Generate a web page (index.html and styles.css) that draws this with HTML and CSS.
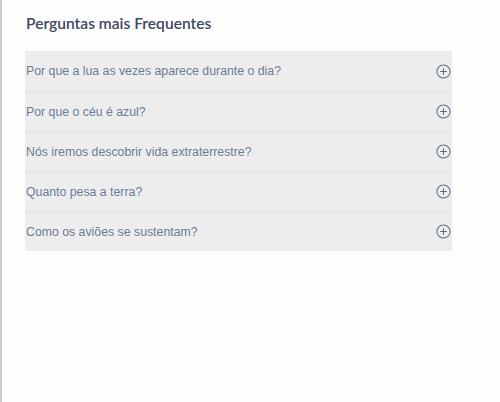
FILE: index.html
```html
<!DOCTYPE html>
<html lang="pt">
<head>
<meta charset="utf-8">
<link rel="stylesheet" href="styles.css">
</head>
<body>
<main class="page">
  <h1 class="title">Perguntas mais Frequentes</h1>
  <ul class="faq">
    <li class="item"><span class="q">Por que a lua as vezes aparece durante o dia?</span><svg class="icon" viewBox="0 0 16 16"><circle cx="8" cy="8" r="7" /><path d="M8 4.5v7M4.5 8h7"/></svg></li>
    <li class="item"><span class="q">Por que o céu é azul?</span><svg class="icon" viewBox="0 0 16 16"><circle cx="8" cy="8" r="7" /><path d="M8 4.5v7M4.5 8h7"/></svg></li>
    <li class="item"><span class="q">Nós iremos descobrir vida extraterrestre?</span><svg class="icon" viewBox="0 0 16 16"><circle cx="8" cy="8" r="7" /><path d="M8 4.5v7M4.5 8h7"/></svg></li>
    <li class="item"><span class="q">Quanto pesa a terra?</span><svg class="icon" viewBox="0 0 16 16"><circle cx="8" cy="8" r="7" /><path d="M8 4.5v7M4.5 8h7"/></svg></li>
    <li class="item"><span class="q">Como os aviões se sustentam?</span><svg class="icon" viewBox="0 0 16 16"><circle cx="8" cy="8" r="7" /><path d="M8 4.5v7M4.5 8h7"/></svg></li>
  </ul>
</main>
</body>
</html>
```
FILE: styles.css
```css
html, body {
  margin: 0;
  padding: 0;
  background: #fdfdfd;
}
body {
  border-left: 2px solid #cbcbcb;
  min-height: 402px;
  box-sizing: border-box;
}
.page {
  padding: 10px 0 0 23px;
  width: 427px;
}
.title {
  margin: 0 0 14px 1px;
  font-family: Lato, sans-serif;
  font-weight: 600;
  font-size: 15.6px;
  line-height: 27px;
  color: #3d4862;
}
.faq {
  list-style: none;
  margin: 0;
  padding: 0;
  background: #ededed;
}
.item {
  display: flex;
  align-items: center;
  justify-content: space-between;
  height: 39px;
  padding: 0 0 0 1px;
  border-top: 1px solid #e4e4e4;
  font-family: "Liberation Sans", Arial, sans-serif;
  font-size: 12.3px;
  color: #6e7b98;
}
.item:first-child {
  border-top: 0;
  height: 40px;
}
.icon {
  width: 15px;
  height: 15px;
  margin-right: 1px;
  fill: none;
  stroke: #5f6c8a;
  stroke-width: 1.1;
}
```
